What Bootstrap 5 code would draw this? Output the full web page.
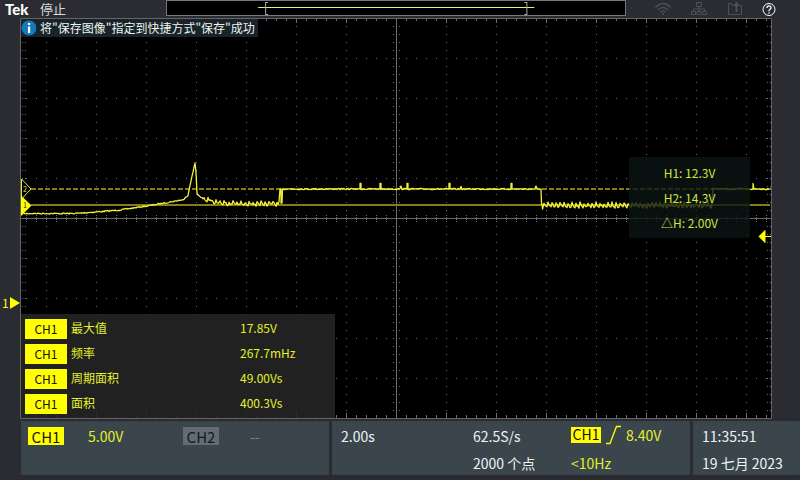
<!DOCTYPE html>
<html lang="zh-CN">
<head>
<meta charset="utf-8">
<meta name="viewport" content="width=device-width, initial-scale=1">
<title>Tek</title>
<link href="https://cdn.jsdelivr.net/npm/bootstrap@5.3.0/dist/css/bootstrap.min.css" rel="stylesheet">
<style>
:root{--sig:#ffff00;--ytext:#e4f02c;--panel:#3b464c;}
body{background:#2a2c32;color:#eef2f2;font-family:"Noto Sans CJK SC",sans-serif;font-size:14px;line-height:20px;}
.topbar{height:18px;padding-left:5px;padding-right:24px;}
.brand{font-family:Lato,sans-serif;font-weight:900;font-size:15px;line-height:18px;color:#fff;width:35px;}
.run-state{font-size:13px;line-height:18px;color:#d8dcdc;width:126px;}
.overview{height:16px;border:1px solid #77767a;background:#000;flex:460 1 0;}
.status-icons{flex:150 1 0;gap:18px;}
.plain-btn{background:none;border:0;padding:0;line-height:0;color:#4d5157;}
.plain-btn.live{color:#fff;}
.gutter-l{width:20px;}
.gutter-r{width:28px;}
.zero-mark{top:71%;transform:translateY(-50%);left:2px;color:var(--sig);font-size:12px;line-height:14px;}
.plot{height:401px;background:#000;}
.notice{top:1px;left:1px;height:18px;font-size:12px;line-height:18px;background:#18242a;color:#eef4f0;padding-right:3px;}
.readings{left:1px;bottom:1px;width:314px;padding:2px 4px 2px;background:rgba(38,38,38,.88);font-size:12px;color:var(--ytext);}
.readings th,.readings td{height:25px;padding:0;font-weight:400;line-height:20px;}
.readings td{padding-bottom:2px;}
.ch-tag{display:block;width:42px;height:20px;background:var(--sig);color:#111;text-align:center;line-height:19px;}
.cursor-box{right:22px;top:139px;width:121px;padding:3px 0;background:rgba(11,20,20,.8);font-size:12px;line-height:25px;color:#d2e43c;}
.foot{margin-left:21px;margin-top:2px;gap:3px;}
.pane{background:var(--panel);height:54px;display:grid;grid-template-rows:30px 24px;align-items:center;box-shadow:inset 0 0 0 1px #38434a;}
.pane-ch{flex:301 1 0;grid-template-columns:60px 95px 67px 1fr;padding-left:7px;}
.pane-acq{flex:349 1 0;grid-template-columns:132px 98px 1fr;padding-left:9px;}
.pane-time{flex:98 1 0;padding-left:9px;}
.ch-name{width:36px;height:18px;font-size:15px;line-height:17px;text-align:center;background:var(--sig);color:#1b1b10;padding:0;border:0;}
.ch-off{background:#636c73;color:#14181b;}
.dim{color:#7c858b;}
.sigtext{color:var(--ytext);}
.trig{gap:5px;padding-bottom:2px;}
.trig-src{width:30px;height:16px;background:var(--sig);color:#111;line-height:15px;text-align:center;}
</style>
<script src="https://cdn.jsdelivr.net/npm/bootstrap@5.3.0/dist/js/bootstrap.bundle.min.js"></script>
</head>
<body>
<header class="topbar d-flex align-items-start">
  <span class="brand">Tek</span>
  <span class="run-state">停止</span>
  <svg class="overview" viewBox="0 0 458 14" preserveAspectRatio="none" fill="none" aria-hidden="true">
    <path d="M91 6.500H367" stroke="#f0f060"/>
    <path d="M101 1.500h-2.500v12h2.500M357 1.500h2.500v12H357" stroke="#a9a9a9"/>
  </svg>
  <div class="status-icons d-flex justify-content-end">
    <button class="plain-btn" aria-label="Wi-Fi"><svg width="18" height="17" viewBox="0 0 18 17" fill="none" stroke="currentColor" stroke-width="1.3"><path d="M1.500 7.500Q9-.5 16.500 7.500M4 10q5-5 10 0M6.500 12.300q2.500-2.400 5 0"/><circle cx="9" cy="14" r="1" fill="currentColor" stroke="none"/></svg></button>
    <button class="plain-btn" aria-label="LAN"><svg width="18" height="17" viewBox="0 0 18 17" fill="none" stroke="currentColor"><path d="M6.500 2.500h5v4h-5zM9 6.500v5M3.500 11.500v-2.500h11v2.500M1.500 11.500h4v3h-4zM7 11.500h4v3H7zM12.500 11.500h4v3h-4z"/></svg></button>
    <button class="plain-btn" aria-label="USB"><svg width="18" height="17" viewBox="0 0 18 17" fill="none" stroke="currentColor"><path d="M8 5.500H6L5 3.500H2.500v11h13v-9h-2"/><path d="M10.500 12V5" stroke-width="2"/><path d="M7.500 6l3-4.500 3.500 4.500z" fill="currentColor" stroke="none"/></svg></button>
    <button class="plain-btn live" aria-label="帮助"><svg width="14" height="17" viewBox="0 0 14 17" fill="none" stroke="currentColor"><circle cx="7" cy="9.500" r="6"/><path d="M5 8q0-2.200 2-2.200T9 7.700Q9 8.700 8 9.300T7 11.200M7 12.200v1.300" stroke-width="1.300"/></svg></button>
  </div>
</header>

<main class="d-flex">
  <div class="gutter-l position-relative flex-shrink-0">
    <div class="zero-mark position-absolute d-flex align-items-center"><span>1</span><svg class="ms-auto" width="11" height="12" viewBox="0 0 11 12"><path d="M1 0l10 6L1 12z" fill="#ff0"/></svg></div>
  </div>
  <section class="position-relative flex-grow-1">
    <svg class="plot d-block w-100" viewBox="20 18 752 401" preserveAspectRatio="none" fill="none" role="img" aria-label="CH1">
      <g id="grid" stroke="#6c6c6c"></g>
      <path d="M20.500 18.500h751v400h-751z" stroke="#66646a"/>
      <path d="M396.500 18v400M21 218.500h750" stroke="#6a6a6a"/>
      <path d="M31 189h740" stroke="#857e16" stroke-width="2" stroke-dasharray="5 2"/>
      <path d="M31 205h739" stroke="#857e16" stroke-width="2"/>
      <path id="trace" stroke="#f5f03a" stroke-width="1.300" stroke-linejoin="round"/>
      <path d="M21.500 179l9.500 10-9.500 10z" fill="#000" stroke="#e8e840"/>
      <path d="M21 195.500L31.500 205.500 21 216z" fill="#ff0"/>
      <text x="23" y="192" font-size="7" fill="#e8e840">2</text>
      <text x="23" y="208" font-size="7" fill="#222">1</text>
      <path d="M759 236.500l6-6v12zM764 236.500h7" fill="#ff0" stroke="#ff0"/>
    </svg>
    <div class="notice position-absolute d-flex align-items-center" role="status">
      <svg class="me-1" width="15" height="16" viewBox="0 0 15 16"><circle cx="8" cy="8" r="7.500" fill="#1479bd"/><path d="M7 3h2.200v2H7zM7 6.500h2.200V13H7z" fill="#fff"/></svg>
      <span>将"保存图像"指定到快捷方式"保存"成功</span>
    </div>
    <div class="readings position-absolute">
      <table class="w-100">
        <tbody>
          <tr><th scope="row" width="46"><span class="ch-tag">CH1</span></th><td width="169">最大值</td><td>17.85V</td></tr>
          <tr><th scope="row"><span class="ch-tag">CH1</span></th><td>频率</td><td>267.7mHz</td></tr>
          <tr><th scope="row"><span class="ch-tag">CH1</span></th><td>周期面积</td><td>49.00Vs</td></tr>
          <tr><th scope="row"><span class="ch-tag">CH1</span></th><td>面积</td><td>400.3Vs</td></tr>
        </tbody>
      </table>
    </div>
    <div class="cursor-box position-absolute text-center">
      <div>H1: 12.3V</div>
      <div>H2: 14.3V</div>
      <div>△H: 2.00V</div>
    </div>
  </section>
  <div class="gutter-r flex-shrink-0"></div>
</main>

<footer class="foot d-flex">
  <section class="pane pane-ch">
    <button class="ch-name">CH1</button>
    <span class="sigtext">5.00V</span>
    <button class="ch-name ch-off">CH2</button>
    <span class="dim">--</span>
  </section>
  <section class="pane pane-acq">
    <span>2.00s</span>
    <span>62.5S/s</span>
    <div class="trig d-flex align-items-center sigtext">
      <span class="trig-src">CH1</span>
      <svg width="15" height="20" viewBox="0 0 15 20" fill="none" stroke="#ff0" stroke-width="1.300"><path d="M0 18.500h4L10.500 1.500H15"/></svg>
      <span>8.40V</span>
    </div>
    <span></span>
    <span>2000 个点</span>
    <span class="sigtext">&lt;10Hz</span>
  </section>
  <section class="pane pane-time">
    <time>11:35:51</time>
    <span>19 七月 2023</span>
  </section>
</footer>

<script>
// Graticule: dotted divisions every 50 x 40 units, with minor ticks on the axes and edges.
const line = (d, dash, offset) =>
  `<path d="${d}"${dash ? ` stroke-dasharray="${dash}" stroke-dashoffset="${offset || 0}"` : ''}/>`;
let g = '';
for (let x = 46.5; x < 770; x += 50) g += line(`M${x} 26V418`, '1 7');
for (const x of [22.5, 25.5, 393.5, 399.5, 767.5, 770.5]) g += line(`M${x} 26V418`, '1 7');
for (let y = 58.5; y < 418; y += 40) g += line(`M26 ${y}H770`, '1 9');
for (let x = 26.5; x < 770; x += 10) {
  const h = (x - 46.5) % 50 === 0 ? 4 : 2;
  g += line(`M${x} 19v${h}M${x} 418v-${h + 1}M${x} 215v1M${x} 217v3M${x} 221v1`);
}
document.getElementById('grid').innerHTML = g;

// CH1 trace: a slow ramp, a peak, then alternating high and low plateaus with ripple.
let seed = 7;
const rnd = () => (seed = (seed * 16807) % 2147483647) / 2147483647 - .5;
const pts = [];
const ramp = [[21,213.5],[75,213.5],[96,212],[120,210],[150,205.5],[170,202],[184,199.5],[188,195],[190,185],[193,172],[195,163],[196,172],[197,193],[200,197],[204,199]];
for (let i = 0; i < ramp.length - 1; i++) {
  const [x0, y0] = ramp[i], [x1, y1] = ramp[i + 1];
  for (let x = x0; x < x1; x++) pts.push([x, y0 + (y1 - y0) * (x - x0) / (x1 - x0) + rnd() * 1.2]);
}
const ripple = (a, b, y, amp) => { for (let x = a, i = 0; x < b; x++, i++) pts.push([x, y + [-1, .1, .8, 1][i % 4] * amp + rnd() * 2.4]); };
ripple(204, 212, 199.5, 1.8);
ripple(212, 225, 202, 1.8);
ripple(225, 279, 203.500, 1.8);
pts.push([279, 202], [280, 189], [281, 189], [281, 203], [282, 203], [282.500, 189]);
const spikes = [360, 380, 407, 449, 511];
for (let x = 283; x <= 540; x++) {
  if (spikes.includes(x)) pts.push([x, 189], [x, 183.500], [x + 1, 183.500], [x + 1, 189]);
  else pts.push([x, 189 + rnd() * 1.3 - (x === 401 || x === 461 || x === 536 ? 2.500 : 0)]);
}
pts.push([541, 189], [541.500, 204], [542, 204], [542.500, 209], [543.500, 205]);
ripple(544, 712, 205, 2);
pts.push([712, 205], [713, 188]);
for (let x = 714; x < 770; x++) {
  if (x === 753) pts.push([x, 189], [x, 183.500], [x + 1, 189]);
  else pts.push([x, 189 + rnd() * 1.4]);
}
document.getElementById('trace').setAttribute('d', 'M' + pts.map(p => p[0] + ' ' + p[1].toFixed(1)).join('L'));
</script>
</body>
</html>
